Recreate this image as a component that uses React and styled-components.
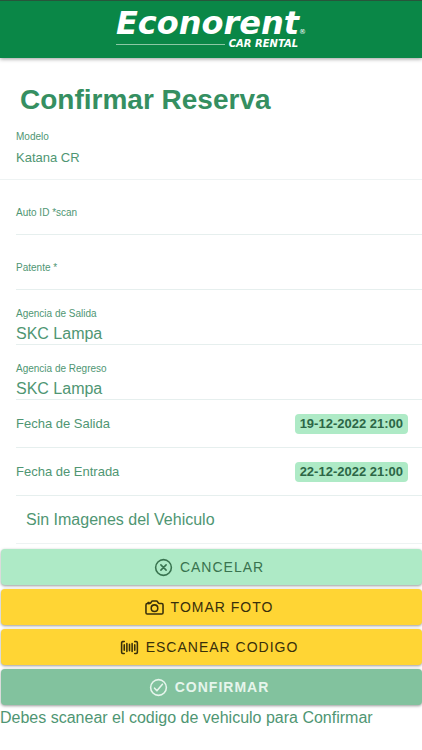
import React, { useState } from 'react';
import styled, { createGlobalStyle } from 'styled-components';
import {
  IoBarcodeOutline,
  IoCameraOutline,
  IoCheckmarkCircleOutline,
  IoCloseCircleOutline,
} from 'react-icons/io5';

const GlobalStyle = createGlobalStyle`
  * {
    box-sizing: border-box;
  }

  body {
    margin: 0;
    background-color: #fff;
    color: #4f9673;
    font-family: "Liberation Sans", Arial, sans-serif;
  }
`;

const Header = styled.header`
  display: flex;
  justify-content: center;
  height: 58px;
  padding-top: 6px;
  border-top: 1px solid #28553b;
  background-color: #0a8747;
  box-shadow: 0 1px 4px rgba(0, 0, 0, 0.4);
`;

const Logo = styled.div`
  display: flex;
  flex-direction: column;
  color: #fff;
  font-family: "DejaVu Sans", Verdana, sans-serif;
  font-style: italic;
  font-weight: bold;
`;

const LogoName = styled.div`
  display: flex;
  align-items: baseline;
  height: 31px;
  font-size: 32px;
  line-height: 32px;
`;

const LogoMark = styled.span`
  font-size: 7px;
  font-weight: normal;
  line-height: 8px;
`;

const LogoTagline = styled.div`
  display: flex;
  align-items: center;
  gap: 4px;
  padding-right: 8px;
  font-size: 10px;
  line-height: 12px;

  &::before {
    content: '';
    flex: 1;
    height: 1px;
    background-color: #8cc8a5;
  }
`;

const Title = styled.h1`
  margin: 0;
  padding: 24px 20px 0;
  color: #358f61;
  font-size: 28px;
  line-height: 36px;
`;

const Model = styled.div`
  height: 62px;
  padding: 13px 16px 0;
  border-bottom: 1px solid #eef3f3;
`;

const Label = styled.label`
  display: block;
  font-size: 10px;
  line-height: 12px;
`;

const ModelName = styled.div`
  padding-top: 6px;
  font-size: 13px;
  line-height: 18px;
`;

const Field = styled.div`
  height: 55px;
  margin-left: 16px;
  padding-top: ${({ $empty }) => ($empty ? '27px' : '18px')};
  border-bottom: 1px solid #e6efee;
`;

const Input = styled.input`
  display: block;
  width: 100%;
  height: ${({ $empty }) => ($empty ? '14px' : '24px')};
  padding: ${({ $empty }) => ($empty ? '0' : '4px 0 0')};
  border: 0;
  outline: 0;
  background: transparent;
  color: inherit;
  font-family: inherit;
  font-size: 16px;
`;

const Row = styled.div`
  display: flex;
  align-items: center;
  justify-content: space-between;
  height: 48px;
  margin-left: 16px;
  padding-right: 14px;
  border-bottom: 1px solid #e6efee;
  font-size: 13px;
`;

const DateBadge = styled.time`
  padding: 2px 5px;
  border-radius: 4px;
  background-color: #aeeac6;
  color: #2c6646;
  font-weight: bold;
  line-height: 16px;
`;

const Empty = styled.div`
  height: 48px;
  margin-left: 16px;
  padding: 0 10px;
  border-bottom: 1px solid #eef3f3;
  font-size: 16px;
  line-height: 47px;
`;

const Actions = styled.div`
  display: flex;
  flex-direction: column;
  gap: 4px;
  padding: 5px 0 3px 1px;
`;

const colors = {
  light: { background: '#aeeac6', text: '#39734f' },
  warning: { background: '#ffd534', text: '#382f0b' },
  success: { background: '#82c29e', text: '#e6f5ec' },
};

const Button = styled.button`
  display: flex;
  align-items: center;
  justify-content: center;
  gap: 6px;
  height: 36px;
  padding: 0 6px 0 0;
  border: 0;
  border-radius: 4px;
  background-color: ${({ $color }) => colors[$color].background};
  box-shadow: 0 1px 3px rgba(0, 0, 0, 0.4);
  color: ${({ $color }) => colors[$color].text};
  font-family: inherit;
  font-size: 14px;
  font-weight: ${({ $bold }) => ($bold ? 'bold' : 'normal')};
  letter-spacing: 1px;
  text-transform: uppercase;

  svg {
    width: 21px;
    height: 21px;
  }

  svg * {
    stroke-width: 38px;
  }
`;

const Hint = styled.p`
  margin: 0;
  font-size: 16px;
  line-height: 20px;
`;

const App = () => {
  const [autoId, setAutoId] = useState('');
  const [patente, setPatente] = useState('');

  return (
    <>
      <GlobalStyle />
      <Header>
        <Logo>
          <LogoName>Econorent<LogoMark>®</LogoMark></LogoName>
          <LogoTagline>CAR RENTAL</LogoTagline>
        </Logo>
      </Header>
      <main>
        <Title>Confirmar Reserva</Title>
        <Model>
          <Label as="div">Modelo</Label>
          <ModelName>Katana CR</ModelName>
        </Model>
        <Field $empty>
          <Label htmlFor="autoId">Auto ID *scan</Label>
          <Input $empty id="autoId" value={autoId} onChange={e => setAutoId(e.target.value)} />
        </Field>
        <Field $empty>
          <Label htmlFor="patente">Patente *</Label>
          <Input $empty id="patente" value={patente} onChange={e => setPatente(e.target.value)} />
        </Field>
        <Field>
          <Label htmlFor="salida">Agencia de Salida</Label>
          <Input id="salida" value="SKC Lampa" readOnly />
        </Field>
        <Field>
          <Label htmlFor="regreso">Agencia de Regreso</Label>
          <Input id="regreso" value="SKC Lampa" readOnly />
        </Field>
        <Row>
          Fecha de Salida
          <DateBadge dateTime="2022-12-19T21:00">19-12-2022 21:00</DateBadge>
        </Row>
        <Row>
          Fecha de Entrada
          <DateBadge dateTime="2022-12-22T21:00">22-12-2022 21:00</DateBadge>
        </Row>
        <Empty>Sin Imagenes del Vehiculo</Empty>
        <Actions>
          <Button type="button" $color="light"><IoCloseCircleOutline />Cancelar</Button>
          <Button type="button" $color="warning"><IoCameraOutline />Tomar Foto</Button>
          <Button type="button" $color="warning"><IoBarcodeOutline />Escanear Codigo</Button>
          <Button type="button" $color="success" $bold disabled><IoCheckmarkCircleOutline />Confirmar</Button>
        </Actions>
        <Hint>Debes scanear el codigo de vehiculo para Confirmar</Hint>
      </main>
    </>
  );
};

export default App;
